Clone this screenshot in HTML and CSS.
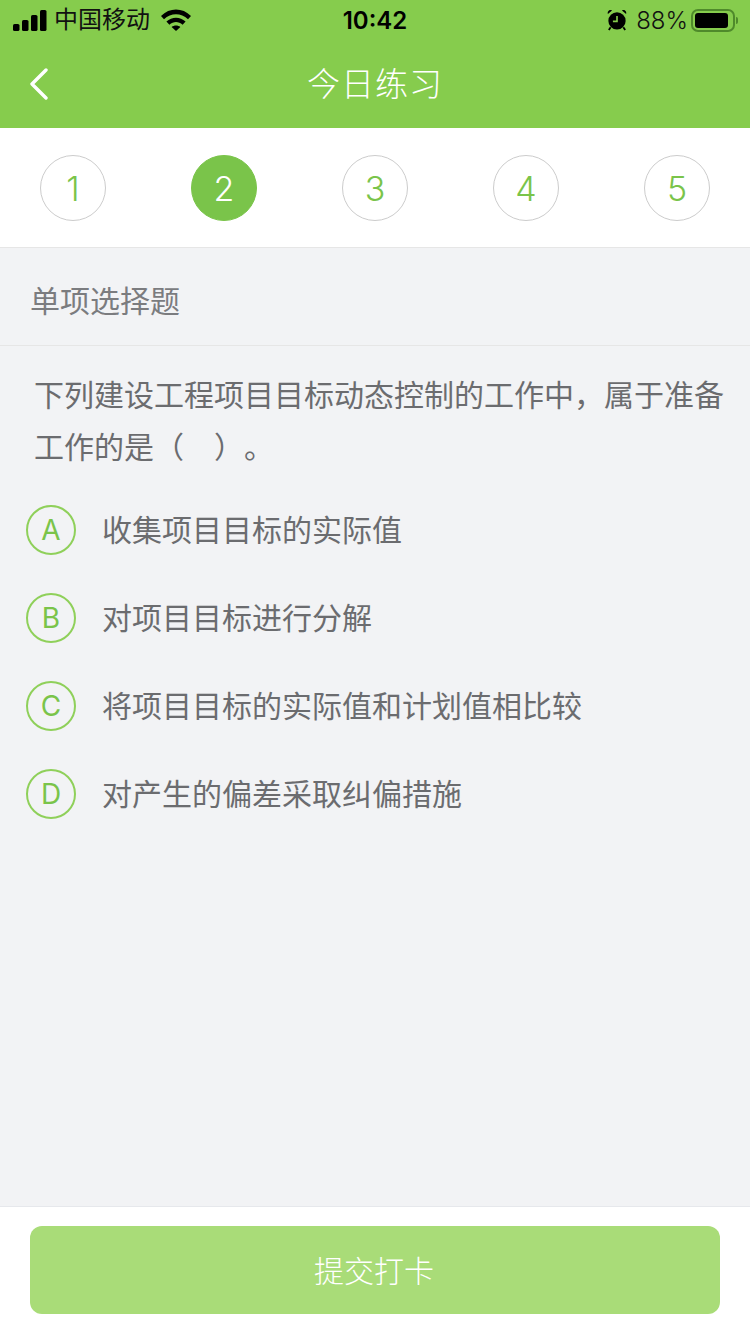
FILE: index.html
```html
<!DOCTYPE html>
<html>
  <head>
    <meta charset="UTF-8">
    <title>今日练习</title>
    <link rel="stylesheet" href="styles.css">
  </head>
  <body>
    <div class="page">
      <div class="top">
        <div class="status">
          <div class="status-left">
            <svg class="signal" width="34" height="21" viewBox="0 0 34 21">
              <rect x="0" y="14" width="6.5" height="7" rx="1.6"/>
              <rect x="9" y="10" width="6.5" height="11" rx="1.6"/>
              <rect x="18" y="5" width="6.5" height="16" rx="1.6"/>
              <rect x="27" y="0" width="6.5" height="21" rx="1.6"/>
            </svg>
            <span class="carrier">中国移动</span>
            <svg class="wifi" width="30" height="22" viewBox="0 0 30 22">
              <path d="M0 7 C8.5 -1.6 21.5 -1.6 30 7 L27 10.2 C20 3.6 10 3.6 3 10.2 Z"/>
              <path d="M5.4 12.6 C11 7.4 19 7.4 24.6 12.6 L21.6 15.8 C17.6 12.2 12.4 12.2 8.4 15.8 Z"/>
              <path d="M10.6 18 C13.2 16 16.8 16 19.4 18 L15 22 Z"/>
            </svg>
          </div>
          <div class="time">10:42</div>
          <div class="status-right">
            <svg class="alarm" width="20" height="22" viewBox="0 0 22 24">
              <circle cx="11" cy="13" r="9.5"/>
              <path d="M1 5.5 L5.5 1.5 C3 0 0 2.5 1 5.5 Z M21 5.5 L16.5 1.5 C19 0 22 2.5 21 5.5 Z"/>
              <path d="M4 20 L2 23 M18 20 L20 23" stroke="#000" stroke-width="2" fill="none"/>
              <path d="M11 7.5 V13.5 H6.5" stroke="#86cc4d" stroke-width="1.8" fill="none"/>
            </svg>
            <span class="battery-text">88%</span>
            <div class="battery"><div class="battery-fill"></div></div>
            <div class="battery-cap"></div>
          </div>
        </div>
        <div class="nav">
          <svg class="back" width="20" height="32" viewBox="0 0 20 32">
            <path d="M17 2 L3 16 L17 30" fill="none" stroke="#fff" stroke-width="3.4" stroke-linecap="round" stroke-linejoin="round"/>
          </svg>
          <div class="nav-title">今日练习</div>
        </div>
      </div>

      <div class="steps">
        <div class="step">1</div>
        <div class="step active">2</div>
        <div class="step">3</div>
        <div class="step">4</div>
        <div class="step">5</div>
      </div>

      <div class="main">
        <div class="type">单项选择题</div>
        <div class="question">下列建设工程项目目标动态控制的工作中，属于准备工作的是（　）。</div>
        <div class="options">
          <div class="option"><div class="letter">A</div><div class="option-text">收集项目目标的实际值</div></div>
          <div class="option"><div class="letter">B</div><div class="option-text">对项目目标进行分解</div></div>
          <div class="option"><div class="letter">C</div><div class="option-text">将项目目标的实际值和计划值相比较</div></div>
          <div class="option"><div class="letter">D</div><div class="option-text">对产生的偏差采取纠偏措施</div></div>
        </div>
      </div>

      <div class="footer">
        <div class="submit">提交打卡</div>
      </div>
    </div>
  </body>
</html>
```

FILE: styles.css
```css
* {
  box-sizing: border-box;
}

body {
  margin: 0;
  font-family: "Liberation Sans", "Noto Sans CJK SC", sans-serif;
}

.page {
  width: 750px;
  height: 1334px;
  display: flex;
  flex-direction: column;
  background-color: #f2f3f5;
  overflow: hidden;
}

.top {
  height: 128px;
  background-color: #86cc4d;
}

.status {
  height: 40px;
  padding: 0 12px 0 13px;
  display: grid;
  grid-template-columns: 1fr auto 1fr;
  align-items: center;
  color: #000;
}

.status svg {
  display: block;
}

.status-left {
  display: flex;
  align-items: center;
}

.signal {
  margin-right: 8px;
}

.carrier {
  font-size: 24px;
  line-height: 40px;
  height: 40px;
  margin-top: -1px;
  margin-left: -1px;
  color: #111;
}

.wifi {
  margin-left: 11px;
}

.time {
  font-family: Inter, "Liberation Sans", sans-serif;
  font-size: 24px;
  font-weight: 600;
  margin-left: -1px;
}

.status-right {
  display: flex;
  align-items: center;
  justify-content: flex-end;
}

.battery-text {
  font-family: Inter, "Liberation Sans", sans-serif;
  font-size: 24px;
  font-weight: 300;
  margin: 0 3px 0 9px;
  color: #111;
}

.battery {
  width: 44px;
  height: 23px;
  padding: 2px;
  border: 2px solid #4f8a2b;
  border-radius: 7px;
}

.battery-fill {
  width: 33px;
  height: 100%;
  background-color: #000;
  border-radius: 3px;
}

.battery-cap {
  width: 2px;
  height: 7px;
  margin-left: 1px;
  background-color: #4f8a2b;
  border-radius: 0 2px 2px 0;
}

.nav {
  height: 88px;
  padding-bottom: 4px;
  position: relative;
  display: flex;
  align-items: center;
  justify-content: center;
}

.back {
  position: absolute;
  left: 29px;
  top: 28px;
}

.nav-title {
  font-size: 33px;
  font-weight: 300;
  color: #fff;
  letter-spacing: 1px;
}

.steps {
  height: 120px;
  padding: 27px 40px 0;
  display: flex;
  justify-content: space-between;
  background-color: #fff;
  border-bottom: 1px solid #e6e6e6;
}

.step {
  width: 66px;
  height: 66px;
  border: 1px solid #ccc;
  border-radius: 50%;
  display: flex;
  align-items: center;
  justify-content: center;
  font-family: Inter, "Liberation Sans", sans-serif;
  font-size: 34px;
  font-weight: 300;
  color: #7ac44a;
}

.step.active {
  background-color: #7ac44a;
  border-color: #7ac44a;
  color: #fff;
}

.main {
  flex: 1;
}

.type {
  height: 98px;
  padding: 4px 0 0 30px;
  display: flex;
  align-items: center;
  font-size: 30px;
  color: #7b7c7f;
  border-bottom: 1px solid #e6e6e6;
}

.question {
  padding: 24px 25px 0 34px;
  font-size: 30px;
  line-height: 52px;
  color: #6b6c6f;
  text-spacing-trim: space-all;
}

.options {
  padding: 12px 0 0 26px;
  display: flex;
  flex-direction: column;
}

.option {
  height: 88px;
  display: flex;
  align-items: center;
  font-size: 30px;
  color: #6b6c6f;
}

.option-text {
  margin-left: -1px;
  margin-top: -4px;
}

.letter {
  width: 50px;
  height: 50px;
  margin-right: 27px;
  border: 2px solid #8fd05a;
  border-radius: 50%;
  display: flex;
  align-items: center;
  justify-content: center;
  font-family: Inter, "Liberation Sans", sans-serif;
  font-size: 28px;
  color: #7ac44a;
}

.footer {
  height: 128px;
  padding: 19px 30px 0;
  background-color: #fff;
  border-top: 1px solid #e6e8ec;
}

.submit {
  height: 88px;
  padding: 0 2px 3px 0;
  display: flex;
  align-items: center;
  justify-content: center;
  background-color: #a9dc78;
  border-radius: 12px;
  font-size: 30px;
  font-weight: 300;
  color: #fff;
}
```
